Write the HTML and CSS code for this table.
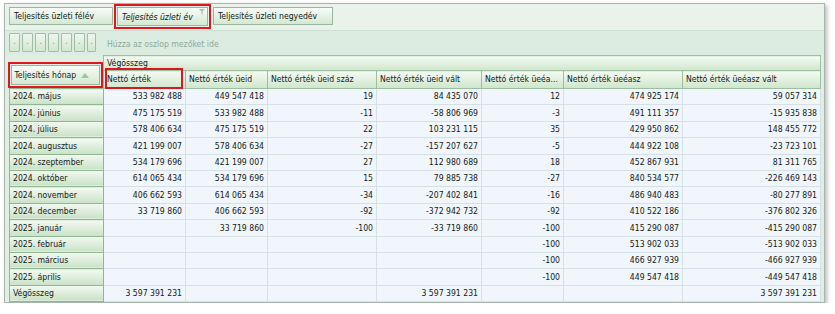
FILE: index.html
```html
<!DOCTYPE html>
<html lang="hu">
<head>
<meta charset="utf-8">
<title>Pivot</title>
<link rel="stylesheet" href="styles.css">
</head>
<body>
<div class="panel">
  <div class="filter-bar">
    <div class="field f1">Teljesítés üzleti félév</div>
    <div class="field f2 marked"><span class="it">Teljesítés üzleti év</span><svg class="funnel" width="6" height="6" viewBox="0 0 6 6"><path d="M0 0H6L3.6 2.8V6L2.4 5V2.8Z" fill="#b4c0b8"/></svg></div>
    <div class="field f3">Teljesítés üzleti negyedév</div>
  </div>
  <div class="column-bar">
    <div class="dots">
      <span class="dot">.</span><span class="dot">.</span><span class="dot">.</span><span class="dot">.</span><span class="dot">.</span><span class="dot">.</span><span class="dot last">.</span>
    </div>
    <span class="hint">Húzza az oszlop mezőket ide</span>
  </div>
  <table class="pivot">
    <colgroup>
      <col class="c0"><col class="c1"><col class="c2"><col class="c3"><col class="c4"><col class="c5"><col class="c6"><col class="c7">
    </colgroup>
    <thead>
      <tr class="gh-row">
        <th rowspan="2" class="row-area"><div class="field rowfield marked">Teljesítés hónap<svg class="sort" width="8" height="5" viewBox="0 0 8 5"><path d="M0 5L4 0L8 5Z" fill="#9cc89a"/></svg></div></th>
        <th colspan="7" class="grand-head">Végösszeg</th>
      </tr>
      <tr class="ch-row">
        <th class="col-head boxed">Nettó érték</th>
        <th class="col-head">Nettó érték üeid</th>
        <th class="col-head">Nettó érték üeid száz</th>
        <th class="col-head">Nettó érték üeid vált</th>
        <th class="col-head">Nettó érték üeéa...</th>
        <th class="col-head">Nettó érték üeéasz</th>
        <th class="col-head">Nettó érték üeéasz vált</th>
      </tr>
    </thead>
    <tbody>
      <tr><th>2024. május</th><td>533 982 488</td><td>449 547 418</td><td>19</td><td>84 435 070</td><td>12</td><td>474 925 174</td><td>59 057 314</td></tr>
      <tr><th>2024. június</th><td>475 175 519</td><td>533 982 488</td><td>-11</td><td>-58 806 969</td><td>-3</td><td>491 111 357</td><td>-15 935 838</td></tr>
      <tr><th>2024. július</th><td>578 406 634</td><td>475 175 519</td><td>22</td><td>103 231 115</td><td>35</td><td>429 950 862</td><td>148 455 772</td></tr>
      <tr><th>2024. augusztus</th><td>421 199 007</td><td>578 406 634</td><td>-27</td><td>-157 207 627</td><td>-5</td><td>444 922 108</td><td>-23 723 101</td></tr>
      <tr><th>2024. szeptember</th><td>534 179 696</td><td>421 199 007</td><td>27</td><td>112 980 689</td><td>18</td><td>452 867 931</td><td>81 311 765</td></tr>
      <tr><th>2024. október</th><td>614 065 434</td><td>534 179 696</td><td>15</td><td>79 885 738</td><td>-27</td><td>840 534 577</td><td>-226 469 143</td></tr>
      <tr><th>2024. november</th><td>406 662 593</td><td>614 065 434</td><td>-34</td><td>-207 402 841</td><td>-16</td><td>486 940 483</td><td>-80 277 891</td></tr>
      <tr><th>2024. december</th><td>33 719 860</td><td>406 662 593</td><td>-92</td><td>-372 942 732</td><td>-92</td><td>410 522 186</td><td>-376 802 326</td></tr>
      <tr><th>2025. január</th><td></td><td>33 719 860</td><td>-100</td><td>-33 719 860</td><td>-100</td><td>415 290 087</td><td>-415 290 087</td></tr>
      <tr><th>2025. február</th><td></td><td></td><td></td><td></td><td>-100</td><td>513 902 033</td><td>-513 902 033</td></tr>
      <tr><th>2025. március</th><td></td><td></td><td></td><td></td><td>-100</td><td>466 927 939</td><td>-466 927 939</td></tr>
      <tr><th>2025. április</th><td></td><td></td><td></td><td></td><td>-100</td><td>449 547 418</td><td>-449 547 418</td></tr>
      <tr><th>Végösszeg</th><td>3 597 391 231</td><td></td><td></td><td>3 597 391 231</td><td></td><td></td><td>3 597 391 231</td></tr>
    </tbody>
  </table>
</div>
</body>
</html>
```
FILE: styles.css
```css
html, body {
  margin: 0;
  background: #ffffff;
}
body {
  font-family: "DejaVu Sans Condensed", "DejaVu Sans", "Liberation Sans", sans-serif;
  font-stretch: condensed;
  font-size: 8.6px;
  color: #142017;
}
.panel {
  margin: 3px 0 0 4px;
  width: 819px;
  height: 298px;
  border: 1px solid #a9b6ad;
  background: #e1eee3;
  box-shadow: 2px 2px 4px rgba(0, 0, 0, 0.28);
}
.filter-bar {
  box-sizing: border-box;
  height: 27px;
  padding: 3px 0 0 4px;
  display: flex;
  align-items: flex-start;
  gap: 4px;
  background: #e9f3eb;
  border-bottom: 1px solid #cadfcf;
}
.field {
  box-sizing: border-box;
  height: 18px;
  display: flex;
  align-items: center;
  padding: 0 4px;
  border: 1px solid #9ab79e;
  background: linear-gradient(#f8fcf7, #d4e8d2);
  white-space: nowrap;
}
.f1 { width: 104px; }
.f2 {
  width: 91px;
  height: 19px;
  justify-content: space-between;
  padding-right: 2px;
}
.f2 .it { font-style: italic; }
.funnel { align-self: flex-start; margin-top: 1px; }
.f3 { width: 120px; margin-left: 1px; }
.marked {
  outline: 2px solid #e0161e;
  outline-offset: 1px;
}
.column-bar {
  box-sizing: border-box;
  height: 24px;
  padding: 2px 0 0 4px;
  display: flex;
  align-items: flex-start;
  background: #ddece0;
}
.dots {
  display: flex;
  gap: 2px;
}
.dot {
  box-sizing: border-box;
  width: 11px;
  height: 19px;
  border: 1px solid #a3bca7;
  border-radius: 1px;
  background: linear-gradient(#eef6ed, #d3e6d1);
  display: flex;
  justify-content: center;
  align-items: flex-end;
  padding-bottom: 5px;
  line-height: 1;
  color: #a08a94;
}
.dot.last { width: 9px; }
.hint {
  margin-left: 11px;
  margin-top: 6px;
  color: #8ea99b;
}
.pivot {
  margin-left: 4px;
  width: 811px;
  table-layout: fixed;
  border-collapse: collapse;
}
.c0 { width: 94px; }
.c1 { width: 82px; }
.c2 { width: 82px; }
.c3 { width: 109px; }
.c4 { width: 105px; }
.c5 { width: 82px; }
.c6 { width: 119px; }
.c7 { width: 138px; }
.pivot th, .pivot td {
  padding: 0 3px;
  font-weight: normal;
  white-space: nowrap;
  overflow: hidden;
  line-height: 1;
}
.gh-row { height: 15px; }
.ch-row { height: 18px; }
.pivot tbody tr { height: 16.4px; }
.row-area {
  padding: 0 !important;
  vertical-align: bottom;
  background: #e1eee3;
  overflow: visible !important;
}
.rowfield {
  width: 89px;
  height: 20px;
  margin: 0 0 3px 1px;
  padding: 0 1px 0 3px;
  overflow: visible;
}
.sort { margin-left: 5px; }
.grand-head, .col-head {
  text-align: left;
  border: 1px solid #9cbf9f;
  background: linear-gradient(#f4faf3, #cfe5cc);
}
.grand-head { padding-top: 1px; }
.col-head { padding-top: 2px; }
.boxed { position: relative; overflow: visible !important; }
.boxed::after {
  content: "";
  position: absolute;
  left: 1px;
  right: 2px;
  top: -3px;
  bottom: -1px;
  border: 2px solid #e0161e;
}
.pivot tbody th {
  text-align: left;
  border: 1px solid #8fb792;
  background: linear-gradient(#f3f9f2, #c9e2c6);
  padding-left: 3px;
}
.pivot tbody td {
  text-align: right;
  background: #f0f6fb;
  border: 1px solid #d5e0e7;
  padding-right: 3px;
}
```
